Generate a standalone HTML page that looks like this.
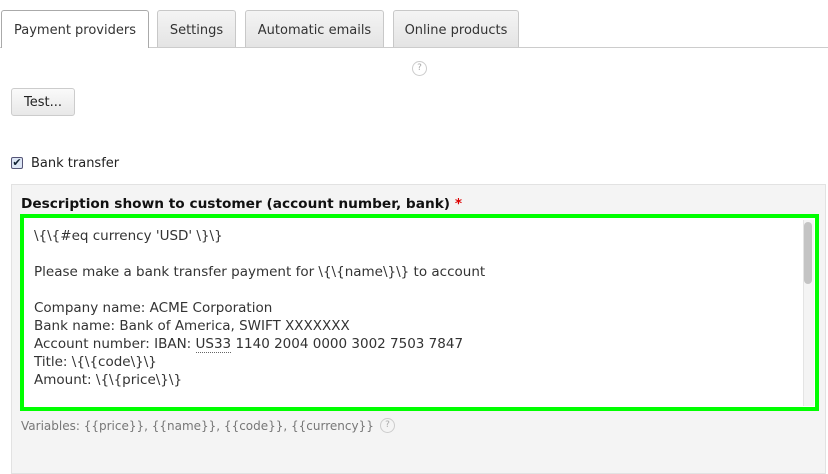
<!DOCTYPE html>
<html><head><style>
body{margin:0;width:828px;height:461px;background:#fff;font-family:"DejaVu Sans","Liberation Sans",sans-serif;font-size:13px;color:#222;position:relative;overflow:hidden}
.a{position:absolute}
.tab{position:absolute;top:10px;height:37px;border:1px solid #c8c8c8;border-bottom:none;border-radius:3px 3px 0 0;background:linear-gradient(#f4f4f4,#e4e4e4);box-sizing:border-box;line-height:39px;text-align:center;color:#333;font-size:13px}
.help{position:absolute;width:13px;height:13px;border:1px solid #ccc;border-radius:50%;font-size:9px;color:#aaa;text-align:center;line-height:13px}
</style></head><body>
<div class="a" style="left:0;top:47px;width:828px;height:1px;background:#ccc"></div>
<div class="tab" style="left:1px;width:148px;background:#fff;height:38px;border-color:#aaa">Payment providers</div>
<div class="tab" style="left:157px;width:79px">Settings</div>
<div class="tab" style="left:245px;width:139px">Automatic emails</div>
<div class="tab" style="left:393px;width:126px">Online products</div>
<div class="help" style="left:412px;top:61px">?</div>
<div class="a" style="left:11px;top:88px;width:64px;height:28px;box-sizing:border-box;border:1px solid #ccc;border-radius:3px;background:linear-gradient(#fafafa,#e8e8e8);text-align:center;line-height:28px">Test...</div>
<div class="a" style="left:11px;top:157px;width:12px;height:12px;box-sizing:border-box;border:1px solid #557;border-radius:2px;background:#dde6f5;font-size:11px;line-height:10px;text-align:center;color:#123">✔</div>
<div class="a" style="left:31px;top:155px;line-height:18px">Bank transfer</div>
<div class="a" style="left:11px;top:184px;width:815px;height:290px;background:#f4f4f4;border:1px solid #e2e2e2;box-sizing:border-box"></div>
<div class="a" style="left:21px;top:195px;font-weight:bold;font-size:13.7px;line-height:18px;color:#111">Description shown to customer (account number, bank) <span style="color:#d00">*</span></div>
<div class="a" style="left:20px;top:214px;width:799px;height:197px;box-sizing:border-box;border:4px solid #0f0;background:#fff"></div>
<div class="a" style="left:803px;top:220px;width:10px;height:186px;background:#f4f4f4;border-left:1px solid #e4e4e4"></div>
<div class="a" style="left:804px;top:222px;width:8px;height:62px;background:#c4c4c4;border-radius:4px"></div>
<div class="a" style="left:34px;top:227px;font-size:13.5px;line-height:18px;white-space:pre;color:#333">\{\{#eq currency 'USD' \}\}

Please make a bank transfer payment for \{\{name\}\} to account

Company name: ACME Corporation
Bank name: Bank of America, SWIFT XXXXXXX
Account number: IBAN: <span style="border-bottom:1px dotted #666">US33</span> 1140 2004 0000 3002 7503 7847
Title: \{\{code\}\}
Amount: \{\{price\}\}</div>
<div class="a" style="left:21px;top:417px;font-size:12px;color:#777;line-height:18px">Variables: {{price}}, {{name}}, {{code}}, {{currency}}</div>
<div class="help" style="left:380px;top:418px">?</div>
</body></html>
